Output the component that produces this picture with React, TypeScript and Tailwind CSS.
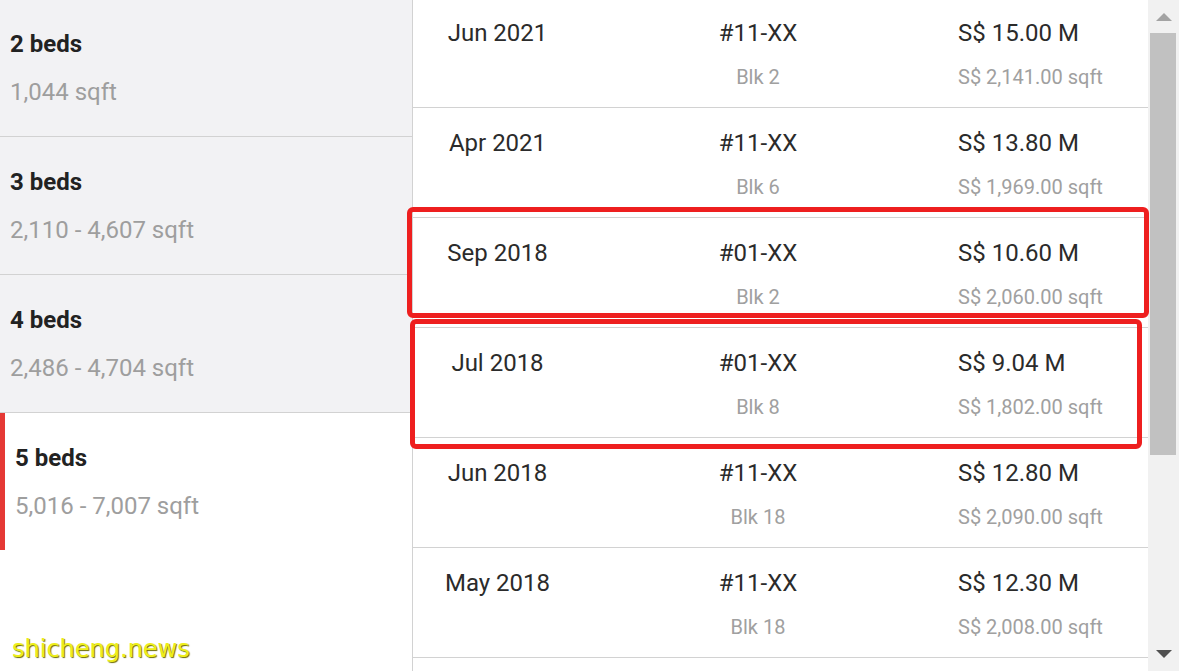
const beds = [
  { title: "2 beds", size: "1,044 sqft", h: "h-[137px]" },
  { title: "3 beds", size: "2,110 - 4,607 sqft", h: "h-[138px]" },
  { title: "4 beds", size: "2,486 - 4,704 sqft", h: "h-[138px]" },
];

const sales = [
  { date: "Jun 2021", unit: "#11-XX", blk: "Blk 2", price: "S$ 15.00 M", psf: "S$ 2,141.00 sqft" },
  { date: "Apr 2021", unit: "#11-XX", blk: "Blk 6", price: "S$ 13.80 M", psf: "S$ 1,969.00 sqft" },
  { date: "Sep 2018", unit: "#01-XX", blk: "Blk 2", price: "S$ 10.60 M", psf: "S$ 2,060.00 sqft" },
  { date: "Jul 2018", unit: "#01-XX", blk: "Blk 8", price: "S$ 9.04 M", psf: "S$ 1,802.00 sqft" },
  { date: "Jun 2018", unit: "#11-XX", blk: "Blk 18", price: "S$ 12.80 M", psf: "S$ 2,090.00 sqft" },
  { date: "May 2018", unit: "#11-XX", blk: "Blk 18", price: "S$ 12.30 M", psf: "S$ 2,008.00 sqft" },
  { date: "", unit: "", blk: "", price: "", psf: "" },
];

const App = () => {
  return (
    <div className="relative flex h-[671px] w-[1179px] overflow-hidden bg-white font-['Roboto',sans-serif]">
      {/* bedroom types */}
      <div className="flex w-[413px] shrink-0 flex-col border-r border-[#d2d2d2] bg-white">
        {beds.map((b) => (
          <div key={b.title} className={`${b.h} shrink-0 flex flex-col justify-center gap-[20px] border-b border-[#d2d2d2] bg-[#f2f2f4] pl-[10px]`}>
            <p className="text-[24px] font-bold leading-[28px] text-[#222]">{b.title}</p>
            <p className="text-[24px] leading-[28px] text-[#9e9e9e]">{b.size}</p>
          </div>
        ))}
        <div className="flex h-[137px] shrink-0 flex-col justify-center gap-[20px] border-l-[5px] border-[#e53935] pl-[10px]">
          <p className="text-[24px] font-bold leading-[28px] text-[#222]">5 beds</p>
          <p className="text-[24px] leading-[28px] text-[#9e9e9e]">5,016 - 7,007 sqft</p>
        </div>
      </div>

      {/* transactions */}
      <div className="flex flex-1 flex-col">
        {sales.map((s, i) => (
          <div
            key={i}
            className={`${i === 0 ? "h-[108px] pt-[19px]" : "h-[110px] pt-[21px]"} shrink-0 grid grid-cols-[167px_354px_1fr] border-b border-[#d2d2d2] pl-[1px]`}
          >
            <p className="text-center text-[24px] leading-[28px] text-[#2b2b2b]">{s.date}</p>
            <div className="flex flex-col items-center gap-[18px]">
              <p className="text-[24px] leading-[28px] text-[#2b2b2b]">{s.unit}</p>
              <p className="text-[20px] leading-[24px] text-[#a0a0a0]">{s.blk}</p>
            </div>
            <div className="flex flex-col gap-[18px] pl-[23px]">
              <p className="text-[24px] leading-[28px] text-[#2b2b2b]">{s.price}</p>
              <p className="text-[20px] leading-[24px] text-[#a0a0a0]">{s.psf}</p>
            </div>
          </div>
        ))}
      </div>

      {/* scrollbar */}
      <div className="flex w-[31px] shrink-0 flex-col bg-[#f1f1f1]">
        <div className="flex h-[33px] items-center justify-center">
          <svg width="16" height="8" viewBox="0 0 16 8"><path d="M8 0 L16 8 L0 8 Z" fill="#a3a3a3" /></svg>
        </div>
        <div className="ml-[2px] mr-[3px] h-[422px] bg-[#c1c1c1]" />
        <div className="flex-1" />
        <div className="flex h-[24px] items-start justify-center pt-[3px]">
          <svg width="16" height="8" viewBox="0 0 16 8"><path d="M0 0 L16 0 L8 8 Z" fill="#505050" /></svg>
        </div>
      </div>

      {/* highlight boxes */}
      <div className="absolute left-[407px] top-[207px] h-[111px] w-[742px] rounded-[6px] border-[5px] border-[#ee1f1f]" />
      <div className="absolute left-[410px] top-[319px] h-[130px] w-[732px] rounded-[6px] border-[5px] border-[#ee1f1f]" />

      {/* watermark */}
      <p className="absolute left-[12px] top-[635px] font-['DejaVu_Sans',sans-serif] text-[24px] leading-[28px] text-[#eeee1a] [text-shadow:1px_1px_1px_#6b6b00]">
        shicheng.news
      </p>
    </div>
  );
};

export default App;
